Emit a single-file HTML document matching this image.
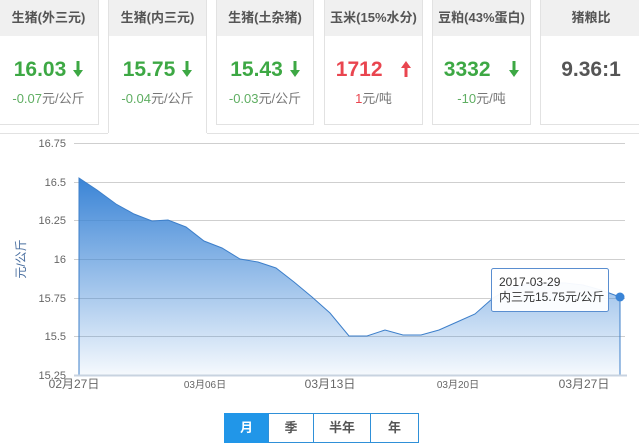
<!DOCTYPE html>
<html><head><meta charset="utf-8"><style>
*{margin:0;padding:0;box-sizing:border-box}
body{width:639px;height:443px;background:#fff;position:relative;overflow:hidden;font-family:"Liberation Sans","Noto Sans CJK SC",sans-serif}
.card{position:absolute;top:0;height:125px;border:1px solid #e2e2e2;border-top:none;background:#fff;text-align:center}
.card .h{height:36px;background:#f0f0f0;font-size:13px;font-weight:bold;color:#555;line-height:36px}
.card .v{font-size:21px;font-weight:bold;margin-top:22px;height:24px;line-height:24px}
.card .s{font-size:13px;color:#777;margin-top:6px}
.g{color:#3da844}.r{color:#e9454f}.gs{color:#5fae62}
.arr{display:inline-block;margin-left:7px;vertical-align:-1px}
.line{position:absolute;background:#e2e2e2}
.btn{position:absolute;top:413px;height:30px;border:1px solid #2f90d8;font-size:13px;font-weight:bold;color:#555;text-align:center;line-height:28px;background:#fff}
</style></head><body>
<div class="card" style="left:-2px;width:101px"><div class="h">生猪(外三元)</div><div class="v g">16.03<svg class="arr" width="10" height="16"><path d="M3.5 0h3v9h3.5L5 16 0 9h3.5z" fill="#3da844"/></svg></div><div class="s"><span class="gs">-0.07</span>元/公斤</div></div>
<div class="card" style="left:108px;width:99px;height:133px;border-bottom:none"><div class="h">生猪(内三元)</div><div class="v g">15.75<svg class="arr" width="10" height="16"><path d="M3.5 0h3v9h3.5L5 16 0 9h3.5z" fill="#3da844"/></svg></div><div class="s"><span class="gs">-0.04</span>元/公斤</div></div>
<div class="card" style="left:216px;width:98px"><div class="h">生猪(土杂猪)</div><div class="v g">15.43<svg class="arr" width="10" height="16"><path d="M3.5 0h3v9h3.5L5 16 0 9h3.5z" fill="#3da844"/></svg></div><div class="s"><span class="gs">-0.03</span>元/公斤</div></div>
<div class="card" style="left:324px;width:99px"><div class="h">玉米(15%水分)</div><div class="v r">1712 &nbsp;<svg class="arr" width="10" height="16"><path d="M3.5 16h3V7h3.5L5 0 0 7h3.5z" fill="#e9454f"/></svg></div><div class="s"><span class="r">1</span>元/吨</div></div>
<div class="card" style="left:432px;width:99px"><div class="h">豆粕(43%蛋白)</div><div class="v g">3332 &nbsp;<svg class="arr" width="10" height="16"><path d="M3.5 0h3v9h3.5L5 16 0 9h3.5z" fill="#3da844"/></svg></div><div class="s"><span class="gs">-10</span>元/吨</div></div>
<div class="card" style="left:540px;width:102px"><div class="h">猪粮比</div><div class="v" style="color:#555">9.36:1</div></div>
<div class="line" style="left:0;top:133px;width:108px;height:1px"></div>
<div class="line" style="left:207px;top:133px;width:432px;height:1px"></div>

<svg style="position:absolute;left:0;top:0" width="639" height="443">
<defs><linearGradient id="f" x1="0" y1="0" x2="0" y2="1"><stop offset="0" stop-color="#3a84d6"/><stop offset="1" stop-color="#3a84d6" stop-opacity="0.05"/></linearGradient></defs>
<g stroke="#cfcfcf" stroke-width="1">
<line x1="74" y1="143.5" x2="625" y2="143.5"/><line x1="74" y1="182.5" x2="625" y2="182.5"/><line x1="74" y1="220.5" x2="625" y2="220.5"/><line x1="74" y1="259.5" x2="625" y2="259.5"/><line x1="74" y1="298.5" x2="625" y2="298.5"/><line x1="74" y1="336.5" x2="625" y2="336.5"/>
</g>
<g fill="url(#f)" stroke="#3d7fca" stroke-width="1">
<path d="M79,178 L97,190 L116,204 L134,214 L152,221 L168,220 L186,227 L204,241 L222,248 L240,259 L258,262 L276,268 L294,282 L312,297 L330,313 L349,336 L367,336 L385,330 L403,335 L421,335 L439,330 L457,322 L475,314 L493,298 L511,288 L529,284 L547,283 L565,283 L583,285 L601,290 L620,297 L620,375 L79,375 Z"/>
</g>
<line x1="74" y1="375.5" x2="627" y2="375.5" stroke="#c8d3e0" stroke-width="2"/>
<g font-size="11" fill="#666" font-family="Liberation Sans,sans-serif" text-anchor="end">
<text x="66" y="147">16.75</text><text x="66" y="186">16.5</text><text x="66" y="224">16.25</text><text x="66" y="263">16</text><text x="66" y="302">15.75</text><text x="66" y="340">15.5</text><text x="66" y="379">15.25</text>
</g>
<text transform="translate(25,259) rotate(-90)" text-anchor="middle" font-size="12" fill="#4a6fa0" font-family="Liberation Sans,Noto Sans CJK SC,sans-serif">元/公斤</text>
<g font-size="12" fill="#666" font-family="Liberation Sans,Noto Sans CJK SC,sans-serif" text-anchor="middle">
<text x="74" y="388">02月27日</text><text x="205" y="388" font-size="10">03月06日</text><text x="330" y="388">03月13日</text><text x="458" y="388" font-size="10">03月20日</text><text x="584" y="388">03月27日</text>
</g>
<circle cx="620" cy="297" r="4.5" fill="#3a84d6"/>
<rect x="491.5" y="268.5" width="117" height="43" rx="2" fill="#fff" fill-opacity="0.95" stroke="#5a8ed0"/>
<text x="499" y="286" font-size="12" fill="#333" font-family="Liberation Sans,Noto Sans CJK SC,sans-serif">2017-03-29</text>
<text x="499" y="301" font-size="12" fill="#333" font-family="Liberation Sans,Noto Sans CJK SC,sans-serif">内三元15.75元/公斤</text>
</svg>
<div class="btn" style="left:224px;width:45px;background:#2196e8;color:#fff;border-color:#2196e8">月</div>
<div class="btn" style="left:268px;width:46px">季</div>
<div class="btn" style="left:313px;width:58px">半年</div>
<div class="btn" style="left:370px;width:49px">年</div>
</body></html>
